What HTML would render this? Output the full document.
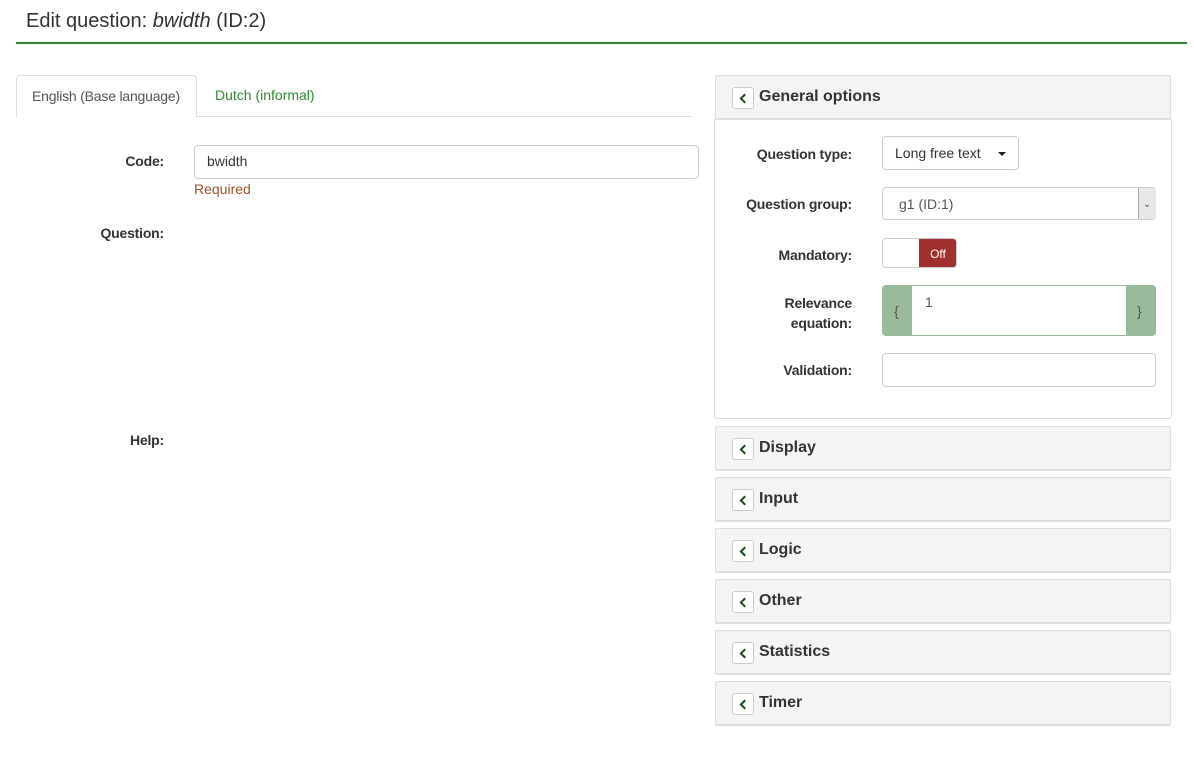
<!DOCTYPE html>
<html><head><style>
body{margin:0;width:1194px;height:769px;background:#fff;font-family:"Liberation Sans",sans-serif;font-size:14px;color:#333;position:relative;overflow:hidden}
.a{position:absolute}
h1{position:absolute;left:26px;top:10px;margin:0;font-size:20px;font-weight:normal;color:#333}
.line{left:16px;top:42px;width:1171px;height:2px;background:#328637}
.lbl{font-weight:bold;text-align:right;font-size:14px;letter-spacing:-0.2px}
.inp{border:1px solid #ccc;border-radius:4px;background:#fff;box-sizing:border-box}
.ph{left:715px;width:456px;height:45px;background:#f4f4f4;border:1px solid #ddd;border-bottom:2px solid #ddd;box-sizing:border-box;border-radius:2px}
.ph .b{position:absolute;left:16px;top:11px;width:22px;height:22px;border:1px solid #ccc;border-radius:3px;background:#fff;box-sizing:border-box}
.ph .b:after{content:"";position:absolute;left:8px;top:7px;width:5px;height:5px;border-left:2.5px solid #1d4a1f;border-bottom:2.5px solid #1d4a1f;transform:rotate(45deg)}
.ph .t{position:absolute;left:43px;top:12px;font-size:16px;font-weight:bold;color:#333}
</style></head><body>
<h1>Edit question: <i>bwidth</i> (ID:2)</h1>
<div class="a line"></div>
<div class="a" style="left:16px;top:116px;width:675px;height:1px;background:#ddd"></div>
<div class="a" style="left:16px;top:75px;width:181px;height:42px;border:1px solid #ddd;border-bottom:none;border-radius:4px 4px 0 0;background:#fff;box-sizing:border-box"></div>
<div class="a" style="left:32px;top:88px;color:#555;letter-spacing:-0.2px">English (Base language)</div>
<div class="a" style="left:215px;top:87px;color:#328637">Dutch (informal)</div>
<div class="a lbl" style="left:60px;width:104px;top:153px">Code:</div>
<div class="a inp" style="left:194px;top:145px;width:505px;height:34px"></div>
<div class="a" style="left:207px;top:153px">bwidth</div>
<div class="a" style="left:194px;top:181px;color:#a0522d">Required</div>
<div class="a lbl" style="left:60px;width:104px;top:225px">Question:</div>
<div class="a lbl" style="left:60px;width:104px;top:432px">Help:</div>

<div class="a ph" style="top:75px"><div class="b"></div><div class="t">General options</div></div>
<div class="a" style="left:714px;top:119px;width:458px;height:300px;border:1px solid #ddd;border-top:none;box-sizing:border-box;border-radius:0 0 3px 3px"></div>
<div class="a lbl" style="left:720px;width:132px;top:146px">Question type:</div>
<div class="a inp" style="left:882px;top:136px;width:137px;height:34px"></div>
<div class="a" style="left:895px;top:145px">Long free text</div>
<div class="a" style="left:998px;top:152px;border-left:4px solid transparent;border-right:4px solid transparent;border-top:4px solid #222"></div>
<div class="a lbl" style="left:720px;width:132px;top:196px">Question group:</div>
<div class="a inp" style="left:882px;top:187px;width:274px;height:33px"></div>
<div class="a" style="left:1138px;top:188px;width:17px;height:31px;background:#e8e8e8;border-left:1px solid #aaa"></div>
<div class="a" style="left:1143px;top:199px;font-size:10px;color:#555">&#8964;</div>
<div class="a" style="left:899px;top:196px;color:#555">g1 (ID:1)</div>
<div class="a lbl" style="left:720px;width:132px;top:247px">Mandatory:</div>
<div class="a inp" style="left:882px;top:238px;width:75px;height:30px;overflow:hidden"><div class="a" style="left:36px;top:0;width:38px;height:30px;background:#a0302d;color:#fff;font-size:12px;text-align:center;line-height:30px">Off</div></div>
<div class="a lbl" style="left:720px;width:132px;top:293px;line-height:20px">Relevance<br>equation:</div>
<div class="a" style="left:882px;top:285px;width:274px;height:51px;background:#9aba9c;border-radius:4px"></div>
<div class="a" style="left:912px;top:286px;width:214px;height:49px;background:#fff"></div>
<div class="a" style="left:894px;top:303px;color:#555">{</div>
<div class="a" style="left:1137px;top:303px;color:#555">}</div>
<div class="a" style="left:925px;top:294px;color:#555">1</div>
<div class="a lbl" style="left:720px;width:132px;top:362px">Validation:</div>
<div class="a inp" style="left:882px;top:353px;width:274px;height:34px"></div>

<div class="a ph" style="top:426px"><div class="b"></div><div class="t">Display</div></div>
<div class="a ph" style="top:477px"><div class="b"></div><div class="t">Input</div></div>
<div class="a ph" style="top:528px"><div class="b"></div><div class="t">Logic</div></div>
<div class="a ph" style="top:579px"><div class="b"></div><div class="t">Other</div></div>
<div class="a ph" style="top:630px"><div class="b"></div><div class="t">Statistics</div></div>
<div class="a ph" style="top:681px"><div class="b"></div><div class="t">Timer</div></div>
</body></html>
